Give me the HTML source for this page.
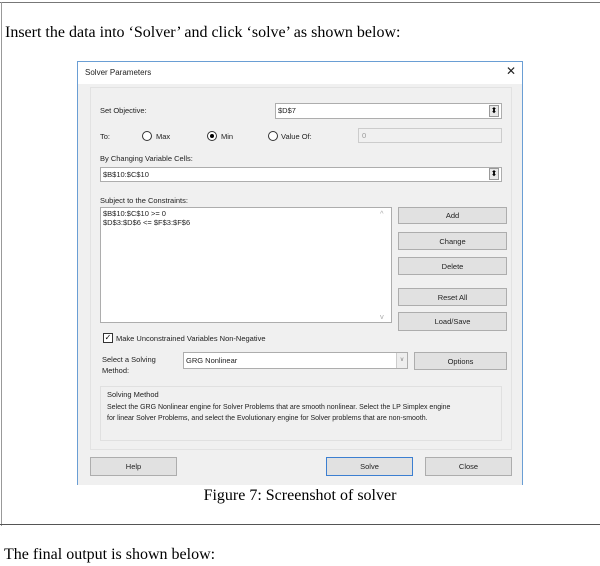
<!DOCTYPE html>
<html><head><style>
*{margin:0;padding:0;box-sizing:border-box}
body{width:600px;height:566px;background:#fff;position:relative;overflow:hidden;font-family:"Liberation Serif",serif}
.a{position:absolute}
.t{font-size:16px;color:#000;white-space:nowrap}
.d{font-family:"Liberation Sans",sans-serif;font-size:7.5px;color:#222;white-space:nowrap;position:absolute}
.inp{position:absolute;background:#fff;border:1px solid #adadad}
.btn{position:absolute;background:#e1e1e1;border:1px solid #adadad;font-family:"Liberation Sans",sans-serif;font-size:7.5px;color:#222;text-align:center;display:flex;align-items:center;justify-content:center}
.rad{position:absolute;width:10px;height:10px;border:1px solid #333;border-radius:50%;background:#fff}
.spin{position:absolute;width:10px;height:12px;border:1px solid #999;background:#e8e8e8;font-size:8px;line-height:10px;text-align:center;font-family:"DejaVu Sans",sans-serif}
</style></head><body>
<div class="a" style="left:0;top:2px;width:600px;height:1px;background:#777"></div>
<div class="a" style="left:1px;top:2px;width:1px;height:524px;background:#999"></div>
<div class="a t" style="left:5px;top:24px">Insert the data into ‘Solver’ and click ‘solve’ as shown below:</div>

<div class="a" style="left:77px;top:61px;width:446px;height:424px;background:#f0f0f0;border-left:1px solid #6a9ed4;border-right:1px solid #6a9ed4;border-top:1px solid #6a9ed4"></div>
<div class="a" style="left:78px;top:62px;width:444px;height:22px;background:#fff"></div>
<div class="d" style="left:85px;top:68px;font-size:8px">Solver Parameters</div>
<div class="a" style="left:506px;top:64px;font-family:'DejaVu Sans',sans-serif;font-size:12px;color:#222">✕</div>
<div class="a" style="left:90px;top:87px;width:422px;height:363px;border:1px solid #e2e2e2;background:#f0f0f0"></div>

<div class="d" style="left:100px;top:106px">Set Objective:</div>
<div class="inp" style="left:275px;top:103px;width:227px;height:16px"></div>
<div class="d" style="left:278px;top:106px">$D$7</div>
<div class="spin" style="left:489px;top:105px">⬍</div>

<div class="d" style="left:100px;top:132px">To:</div>
<div class="rad" style="left:142px;top:131px"></div><div class="d" style="left:156px;top:132px">Max</div>
<div class="rad" style="left:207px;top:131px"></div><div class="a" style="left:210px;top:134px;width:4px;height:4px;border-radius:50%;background:#000"></div><div class="d" style="left:221px;top:132px">Min</div>
<div class="rad" style="left:268px;top:131px"></div><div class="d" style="left:281px;top:132px">Value Of:</div>
<div class="inp" style="left:358px;top:128px;width:144px;height:15px;background:#f0f0f0;border-color:#ccc"></div>
<div class="d" style="left:362px;top:131px;color:#999">0</div>

<div class="d" style="left:100px;top:154px">By Changing Variable Cells:</div>
<div class="inp" style="left:100px;top:167px;width:402px;height:15px"></div>
<div class="d" style="left:103px;top:170px">$B$10:$C$10</div>
<div class="spin" style="left:489px;top:168px">⬍</div>

<div class="d" style="left:100px;top:196px">Subject to the Constraints:</div>
<div class="inp" style="left:100px;top:207px;width:292px;height:116px"></div>
<div class="d" style="left:103px;top:209px">$B$10:$C$10 &gt;= 0</div>
<div class="d" style="left:103px;top:218px">$D$3:$D$6 &lt;= $F$3:$F$6</div>
<div class="d" style="left:380px;top:209px;color:#aaa">^</div>
<div class="d" style="left:380px;top:312px;color:#aaa">v</div>

<div class="btn" style="left:398px;top:207px;width:109px;height:17px">Add</div>
<div class="btn" style="left:398px;top:232px;width:109px;height:18px">Change</div>
<div class="btn" style="left:398px;top:257px;width:109px;height:18px">Delete</div>
<div class="btn" style="left:398px;top:288px;width:109px;height:18px">Reset All</div>
<div class="btn" style="left:398px;top:312px;width:109px;height:19px">Load/Save</div>

<div class="a" style="left:103px;top:333px;width:10px;height:10px;border:1px solid #333;background:#fff;font-size:8px;line-height:8px;text-align:center;font-family:'DejaVu Sans',sans-serif">✓</div>
<div class="d" style="left:116px;top:334px">Make Unconstrained Variables Non-Negative</div>

<div class="d" style="left:102px;top:354px;line-height:11px">Select a Solving<br>Method:</div>
<div class="inp" style="left:183px;top:352px;width:225px;height:17px"></div>
<div class="d" style="left:186px;top:356px">GRG Nonlinear</div>
<div class="a" style="left:396px;top:353px;width:11px;height:15px;background:#eee;border-left:1px solid #ccc;font-size:6px;color:#777;text-align:center;line-height:15px;font-family:'Liberation Sans'">v</div>
<div class="btn" style="left:414px;top:352px;width:93px;height:18px">Options</div>

<div class="a" style="left:100px;top:386px;width:402px;height:55px;border:1px solid #e0e0e0"></div>
<div class="d" style="left:107px;top:390px">Solving Method</div>
<div class="d" style="left:107px;top:404px;font-size:7px">Select the GRG Nonlinear engine for Solver Problems that are smooth nonlinear. Select the LP Simplex engine</div>
<div class="d" style="left:107px;top:415px;font-size:7px">for linear Solver Problems, and select the Evolutionary engine for Solver problems that are non-smooth.</div>

<div class="btn" style="left:90px;top:457px;width:87px;height:19px">Help</div>
<div class="btn" style="left:326px;top:457px;width:87px;height:19px;border-color:#3c7fd1">Solve</div>
<div class="btn" style="left:425px;top:457px;width:87px;height:19px">Close</div>

<div class="a t" style="left:0;width:600px;text-align:center;top:487px">Figure 7: Screenshot of solver</div>
<div class="a" style="left:0;top:524px;width:600px;height:1px;background:#555"></div>
<div class="a t" style="left:4px;top:546px">The final output is shown below:</div>
</body></html>
